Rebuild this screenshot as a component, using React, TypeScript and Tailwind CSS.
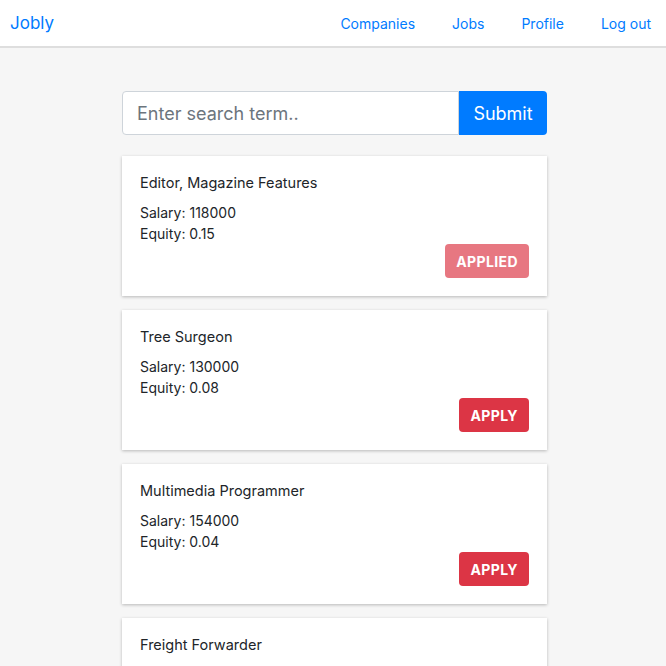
import React from "react";

const jobs = [
  { title: "Editor, Magazine Features", salary: 118000, equity: "0.15", applied: true },
  { title: "Tree Surgeon", salary: 130000, equity: "0.08", applied: false },
  { title: "Multimedia Programmer", salary: 154000, equity: "0.04", applied: false },
  { title: "Freight Forwarder", salary: 90000, equity: "0.02", applied: false },
];

export default function App() {
  return (
    <div className="min-h-[666px] bg-[#f6f6f6] text-[#212529]" style={{ fontFamily: "Inter, 'Liberation Sans', sans-serif" }}>
      <nav className="h-[48px] bg-white border-b-2 border-[#dedede] flex items-center justify-between pl-[10px] pr-[15px]">
        <span className="text-[17px] text-[#007bff] mt-[1px]">Jobly</span>
        <div className="flex items-center gap-[37px] text-[14px] text-[#007bff]">
          <span>Companies</span>
          <span>Jobs</span>
          <span>Profile</span>
          <span>Log out</span>
        </div>
      </nav>
      <div className="w-[425px] ml-[122px] pt-[43px]">
        <div className="flex h-[44px]">
          <div className="flex-1 bg-white border border-[#ced4da] rounded-l-[4px] flex items-center px-[14px] text-[18px] text-[#6c757d]">
            Enter search term..
          </div>
          <div className="w-[88px] bg-[#007bff] rounded-r-[4px] flex items-center justify-center text-[18px] text-white">
            Submit
          </div>
        </div>
        <div className="flex flex-col gap-[14px] mt-[21px]">
          {jobs.map((j) => (
            <div key={j.title} className="bg-white shadow-[0_1px_3px_rgba(0,0,0,0.25)] px-[18px] pt-[18px] pb-[19px] h-[140px] flex flex-col">
              <div className="text-[14.5px] leading-[18px]">{j.title}</div>
              <div className="mt-[10px] text-[14px] leading-[21px]">Salary: {j.salary}</div>
              <div className="text-[14px] leading-[21px]">Equity: {j.equity}</div>
              <div className="flex justify-end mt-auto">
                <div
                  className={`h-[34px] px-[11px] rounded-[4px] flex items-center text-white font-bold text-[14px] tracking-[0.4px] ${
                    j.applied ? "bg-[#e77781]" : "bg-[#dc3545]"
                  }`}
                >
                  {j.applied ? "APPLIED" : "APPLY"}
                </div>
              </div>
            </div>
          ))}
        </div>
      </div>
    </div>
  );
}
